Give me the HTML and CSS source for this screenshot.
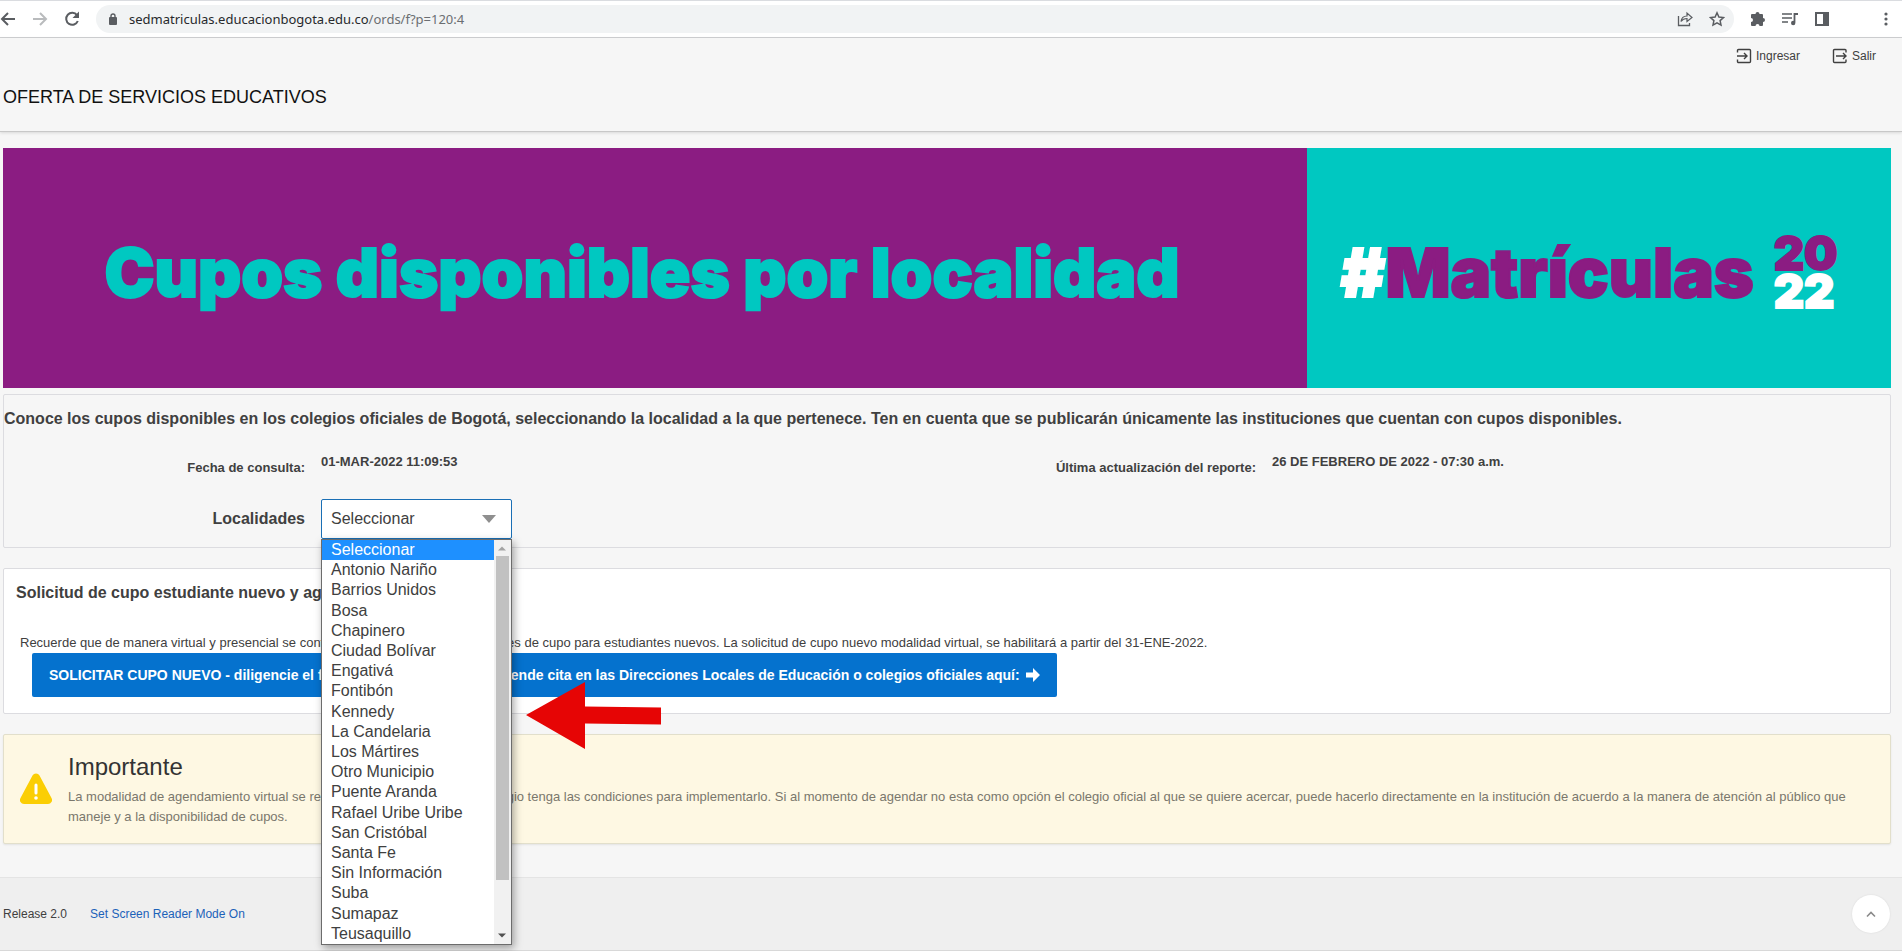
FILE: index.html
```html
<!DOCTYPE html>
<html lang="es">
<head>
<meta charset="utf-8">
<title>Oferta de servicios educativos</title>
<link rel="stylesheet" href="styles.css">
</head>
<body>
<div class="browser">
  <button class="tool" aria-label="Atrás"><svg width="16" height="16" viewBox="0 0 16 16"><path d="M15 8H2M8 2L2 8l6 6" fill="none" stroke="#5a5d61" stroke-width="2"/></svg></button>
  <button class="tool" aria-label="Adelante"><svg width="16" height="16" viewBox="0 0 16 16"><path d="M1 8h13M8 2l6 6-6 6" fill="none" stroke="#b9bbbd" stroke-width="2"/></svg></button>
  <button class="tool" aria-label="Recargar"><svg width="16" height="16" viewBox="0 0 16 16"><path d="M13 4.200A6 6 0 1 0 13.800 10" fill="none" stroke="#5a5d61" stroke-width="2"/><path d="M15 .5V7H8.500z" fill="#5a5d61"/></svg></button>
  <div class="omnibox">
    <svg class="lock" width="10" height="12" viewBox="0 0 10 12"><rect x="1" y="4" width="8" height="8" rx="1" fill="#5a5d61"/><path d="M3 5V3a2 2 0 0 1 4 0v2" fill="none" stroke="#5a5d61" stroke-width="1.400"/></svg>
    <span class="url">sedmatriculas.educacionbogota.edu.co<span class="path">/ords/f?p=120:4</span></span>
    <button class="tool" aria-label="Compartir"><svg width="16" height="16" viewBox="0 0 16 16"><path d="M1.500 5v9.500h11V12" fill="none" stroke="#5a5d61" stroke-width="1.300"/><path d="M4 10.500c.5-4 3-5.500 6-5.500V2l5 4.500-5 4v-3c-2.500 0-4.500.8-6 3z" fill="none" stroke="#5a5d61" stroke-width="1.200"/></svg></button>
    <button class="tool" aria-label="Favorito"><svg width="16" height="16" viewBox="0 0 16 16"><path d="M8 1.800l1.900 4.200 4.600.5-3.400 3.100.9 4.500L8 11.800l-4 2.300.9-4.500L1.500 6.500 6.100 6z" fill="none" stroke="#5a5d61" stroke-width="1.500"/></svg></button>
  </div>
  <div class="actions">
    <button class="tool" aria-label="Extensiones"><svg width="16" height="16" viewBox="0 0 16 16"><path d="M5.500 3a2 2 0 0 1 4 0H12a1 1 0 0 1 1 1v3a2 2 0 0 1 0 4v3a1 1 0 0 1-1 1H9.500a2 2 0 0 0-4 0H2a1 1 0 0 1-1-1v-3a2 2 0 0 0 0-4V4a1 1 0 0 1 1-1z" fill="#5a5d61"/></svg></button>
    <button class="tool" aria-label="Multimedia"><svg width="16" height="16" viewBox="0 0 16 16"><path d="M0 3h10M0 7h10M0 11h6" stroke="#5a5d61" stroke-width="1.600"/><path d="M16 3h-3.500v8.500" fill="none" stroke="#5a5d61" stroke-width="1.800"/><circle cx="11.200" cy="12" r="2.200" fill="#5a5d61"/></svg></button>
    <button class="tool" aria-label="Panel lateral"><svg width="16" height="16" viewBox="0 0 16 16"><path d="M1 1h14v14H1zM3 3v10h6V3z" fill="#5a5d61" fill-rule="evenodd"/></svg></button>
    <button class="tool menu" aria-label="Menú"><svg width="16" height="16" viewBox="0 0 16 16"><g fill="#5a5d61"><circle cx="8" cy="3" r="1.600"/><circle cx="8" cy="8" r="1.600"/><circle cx="8" cy="13" r="1.600"/></g></svg></button>
  </div>
</div>

<header class="header">
  <nav class="nav">
    <a href="#"><svg width="16" height="16" viewBox="0 0 16 16"><path d="M1.500 4.500v-2a1 1 0 0 1 1-1h11a1 1 0 0 1 1 1v11a1 1 0 0 1-1 1h-11a1 1 0 0 1-1-1v-2M1 8h10M8 5l3 3-3 3" fill="none" stroke="#404040" stroke-width="1.400"/></svg>Ingresar</a>
    <a href="#"><svg width="16" height="16" viewBox="0 0 16 16"><path d="M14 4.500v-2a1 1 0 0 0-1-1H2.500a1 1 0 0 0-1 1v11a1 1 0 0 0 1 1H13a1 1 0 0 0 1-1v-2M4 8h10M11 5l3 3-3 3" fill="none" stroke="#404040" stroke-width="1.400"/></svg>Salir</a>
  </nav>
  <h1>OFERTA DE SERVICIOS EDUCATIVOS</h1>
</header>

<main class="main">
  <section class="banner">
    <div class="banner-title">Cupos disponibles por localidad</div>
    <div class="banner-tag">
      <div class="hashtag"><span class="white">#</span>Matrículas</div>
      <div class="year"><span>20</span><span class="white">22</span></div>
    </div>
  </section>

  <section class="region query">
    <p class="lead">Conoce los cupos disponibles en los colegios oficiales de Bogotá, seleccionando la localidad a la que pertenece. Ten en cuenta que se publicarán únicamente las instituciones que cuentan con cupos disponibles.</p>
    <div class="fields">
      <div class="field"><span class="label">Fecha de consulta:</span><span class="value">01-MAR-2022 11:09:53</span></div>
      <div class="field"><span class="label">Última actualización del reporte:</span><span class="value">26 DE FEBRERO DE 2022 - 07:30 a.m.</span></div>
      <div class="field pick">
        <label class="label" for="loc">Localidades</label>
        <div class="combo">
          <select id="loc"><option>Seleccionar</option></select>
          <svg class="caret" width="14" height="8" viewBox="0 0 14 8"><path d="M0 0h14L7 8z" fill="#8f8f8f"/></svg>
          <div class="popup">
            <ul class="options" role="listbox" aria-label="Localidades">
              <li class="on" role="option">Seleccionar</li><li role="option">Antonio Nariño</li><li role="option">Barrios Unidos</li><li role="option">Bosa</li><li role="option">Chapinero</li><li role="option">Ciudad Bolívar</li><li role="option">Engativá</li><li role="option">Fontibón</li><li role="option">Kennedy</li><li role="option">La Candelaria</li><li role="option">Los Mártires</li><li role="option">Otro Municipio</li><li role="option">Puente Aranda</li><li role="option">Rafael Uribe Uribe</li><li role="option">San Cristóbal</li><li role="option">Santa Fe</li><li role="option">Sin Información</li><li role="option">Suba</li><li role="option">Sumapaz</li><li role="option">Teusaquillo</li>
            </ul>
            <div class="scroll">
              <svg width="16" height="16" viewBox="0 0 16 16"><path d="M4 10.500h8L8 6.500z" fill="#a3a3a3"/></svg>
              <div class="track"><div class="thumb"></div></div>
              <svg width="16" height="16" viewBox="0 0 16 16"><path d="M4 5.500h8L8 9.500z" fill="#505050"/></svg>
            </div>
          </div>
          <svg class="pointer" width="136" height="68" viewBox="0 0 136 68"><path d="M0 34L59 1v24.500l76 1v17l-76-1V68z" fill="#e60505"/></svg>
        </div>
      </div>
    </div>
  </section>

  <section class="region request">
    <h2>Solicitud de cupo estudiante nuevo y agendamiento</h2>
    <p>Recuerde que de manera virtual y presencial se continuarán recepcionando solicitudes de cupo para estudiantes nuevos. La solicitud de cupo nuevo modalidad virtual, se habilitará a partir del 31-ENE-2022.</p>
    <button class="primary">SOLICITAR CUPO NUEVO - diligencie el formulario, o si lo prefiere agende cita en las Direcciones Locales de Educación o colegios oficiales aquí:
      <svg width="14" height="14" viewBox="0 0 14 14"><path d="M0 4.500h7V0l7 7-7 7V9.500H0z" fill="#fff"/></svg></button>
  </section>

  <section class="region alert">
    <svg class="warn" width="32" height="32" viewBox="0 0 32 32"><path d="M12.500 2.500a4 4 0 0 1 7 0l12 22.500a4 4 0 0 1-3.500 6H4a4 4 0 0 1-3.500-6z" fill="#fbce04"/><path d="M16 12v8" stroke="#fff" stroke-width="3" stroke-linecap="round"/><circle cx="16" cy="25" r="1.800" fill="#fff"/></svg>
    <div>
      <h3>Importante</h3>
      <p>La modalidad de agendamiento virtual se realizará siempre y cuando el colegio tenga las condiciones para implementarlo. Si al momento de agendar no esta como opción el colegio oficial al que se quiere acercar, puede hacerlo directamente en la institución de acuerdo a la manera de atención al público que maneje y a la disponibilidad de cupos.</p>
    </div>
  </section>
</main>

<footer class="footer">
  <span>Release 2.0</span>
  <a href="#">Set Screen Reader Mode On</a>
  <button class="top" aria-label="Subir"><svg width="10" height="8" viewBox="0 0 10 8"><path d="M1 6.500l4-4 4 4" fill="none" stroke="#8a8a8a" stroke-width="1.600"/></svg></button>
</footer>
</body>
</html>
```

FILE: styles.css
```css
* { box-sizing: border-box; }
body {
  margin: 0;
  min-height: 100vh;
  display: flex;
  flex-direction: column;
  background: #f6f6f6;
  color: #404040;
  font: 13px/20px "Liberation Sans", Arial, sans-serif;
  overflow: hidden;
}
h1, h2, h3, p, ul { margin: 0; padding: 0; }
a { text-decoration: none; color: inherit; }
button { border: 0; background: none; padding: 0; font: inherit; color: inherit; }
svg { display: block; }

.browser {
  display: flex;
  align-items: center;
  height: 38px;
  background: #fff;
  border-top: 1px solid #dadce0;
  border-bottom: 1px solid #d0d1d3;
}
.browser > .tool { margin-right: 16px; }
.omnibox {
  flex: 1;
  display: flex;
  align-items: center;
  gap: 16px;
  height: 28px;
  padding: 0 9px 0 12px;
  border-radius: 14px;
  background: #f1f3f4;
}
.lock { margin-right: -5px; }
.url { flex: 1; color: #27292c; font: 13px/20px "Noto Sans", sans-serif; }
.path { color: #6b6e72; }
.actions { display: flex; gap: 16px; padding: 0 8px 0 16px; }
.menu { margin-left: 32px; }

.header {
  height: 94px;
  padding: 8px 26px 0 3px;
  border-bottom: 1px solid #c8c8c8;
  box-shadow: 0 1px 3px rgba(0, 0, 0, .12);
}
.nav { display: flex; justify-content: flex-end; gap: 32px; font-size: 12px; }
.nav a { display: flex; align-items: center; gap: 4px; }
h1 { margin-top: 19px; color: #111; font-size: 18px; line-height: 24px; font-weight: 400; }

.main { flex: 1; padding: 16px 11px 0 3px; }
.banner {
  display: grid;
  grid-template-columns: 1304fr 584fr;
  height: 240px;
  font-family: Inter, sans-serif;
  font-weight: 900;
  white-space: nowrap;
  -webkit-text-stroke: 2px currentColor;
}
.banner-title {
  display: flex;
  align-items: center;
  justify-content: center;
  padding: 10px 26px 0 0;
  background: #8b1c82;
  color: #00c8c1;
  font-size: 67px;
}
.banner-tag {
  display: flex;
  align-items: center;
  justify-content: center;
  gap: 20px;
  padding: 8px 20px 0 0;
  background: #00c8c1;
  color: #8b1c82;
}
.hashtag { font-size: 68px; line-height: 80px; }
.year { display: grid; font-size: 47px; line-height: 38px; }
.white { color: #fff; -webkit-text-stroke-color: #fff; }

.region { border: 1px solid #dcdce0; border-radius: 2px; }
.query { margin-top: 6px; padding: 12px 0 8px; }
.lead { font-size: 16px; line-height: 24px; font-weight: 700; }
.fields { display: grid; grid-template-columns: 1fr 1fr; column-gap: 16px; font-weight: 700; }
.field { display: grid; grid-template-columns: 301px 1fr; column-gap: 16px; padding: 21px 0; }
.field .label { padding-top: 6px; text-align: right; }
.pick { padding: 0; align-items: center; }
.field label.label { padding: 0; font-size: 16px; }
.combo { position: relative; width: 191px; }
select {
  appearance: none;
  display: block;
  width: 100%;
  height: 40px;
  padding: 0 9px 2px;
  border: 1px solid #1a6fb5;
  border-radius: 2px;
  outline: 0;
  background: #fff;
  color: #404040;
  font: 16px "Liberation Sans", Arial, sans-serif;
}
.caret { position: absolute; right: 16px; top: 16px; }
.popup {
  position: absolute;
  top: 100%;
  left: 0;
  z-index: 2;
  display: flex;
  width: 100%;
  height: 406px;
  border: 1px solid #6c6c6c;
  background: #fff;
  box-shadow: 2px 3px 8px rgba(0, 0, 0, .35);
  font-size: 16px;
  font-weight: 400;
}
.options { flex: 1; display: grid; grid-auto-rows: 1fr; list-style: none; }
.options li { padding-left: 9px; }
.options .on { background: #1e90ff; color: #fff; }
.scroll { width: 17px; display: flex; flex-direction: column; background: #f1f1f1; }
.track { flex: 1; padding: 0 2px; }
.thumb { height: 87%; background: #c1c1c1; }
.pointer { position: absolute; left: 205px; top: 182px; z-index: 3; }

.request { margin-top: 20px; padding: 12px 12px 16px; background: #fff; }
h2 { font-size: 16px; line-height: 24px; }
.request p { margin: 28px 4px 0; }
.primary {
  display: flex;
  align-items: center;
  gap: 6px;
  height: 44px;
  margin-left: 16px;
  padding: 0 17px;
  border-radius: 2px;
  background: #0572ce;
  color: #fff;
  font-size: 14px;
  font-weight: 700;
}

.alert {
  display: flex;
  align-items: center;
  gap: 16px;
  margin-top: 20px;
  padding: 16px;
  background: #fef8e3;
  border-color: #e2dfcb;
  box-shadow: 0 1px 2px rgba(0, 0, 0, .08);
}
.warn { flex: none; }
h3 { margin-bottom: 4px; color: #333; font-size: 24px; line-height: 32px; font-weight: 400; }
.alert p { color: #7a776c; }

.footer {
  display: flex;
  align-items: center;
  gap: 23px;
  height: 74px;
  padding: 0 12px 0 3px;
  border-top: 1px solid #e4e4e4;
  border-bottom: 1px solid #d8d8d8;
  background: #efefef;
  font-size: 12px;
}
.footer a { color: #1c62b9; }
.top {
  display: grid;
  place-items: center;
  width: 38px;
  height: 38px;
  margin-left: auto;
  border-radius: 50%;
  background: #fff;
  box-shadow: 0 0 2px rgba(0, 0, 0, .1);
}
```
